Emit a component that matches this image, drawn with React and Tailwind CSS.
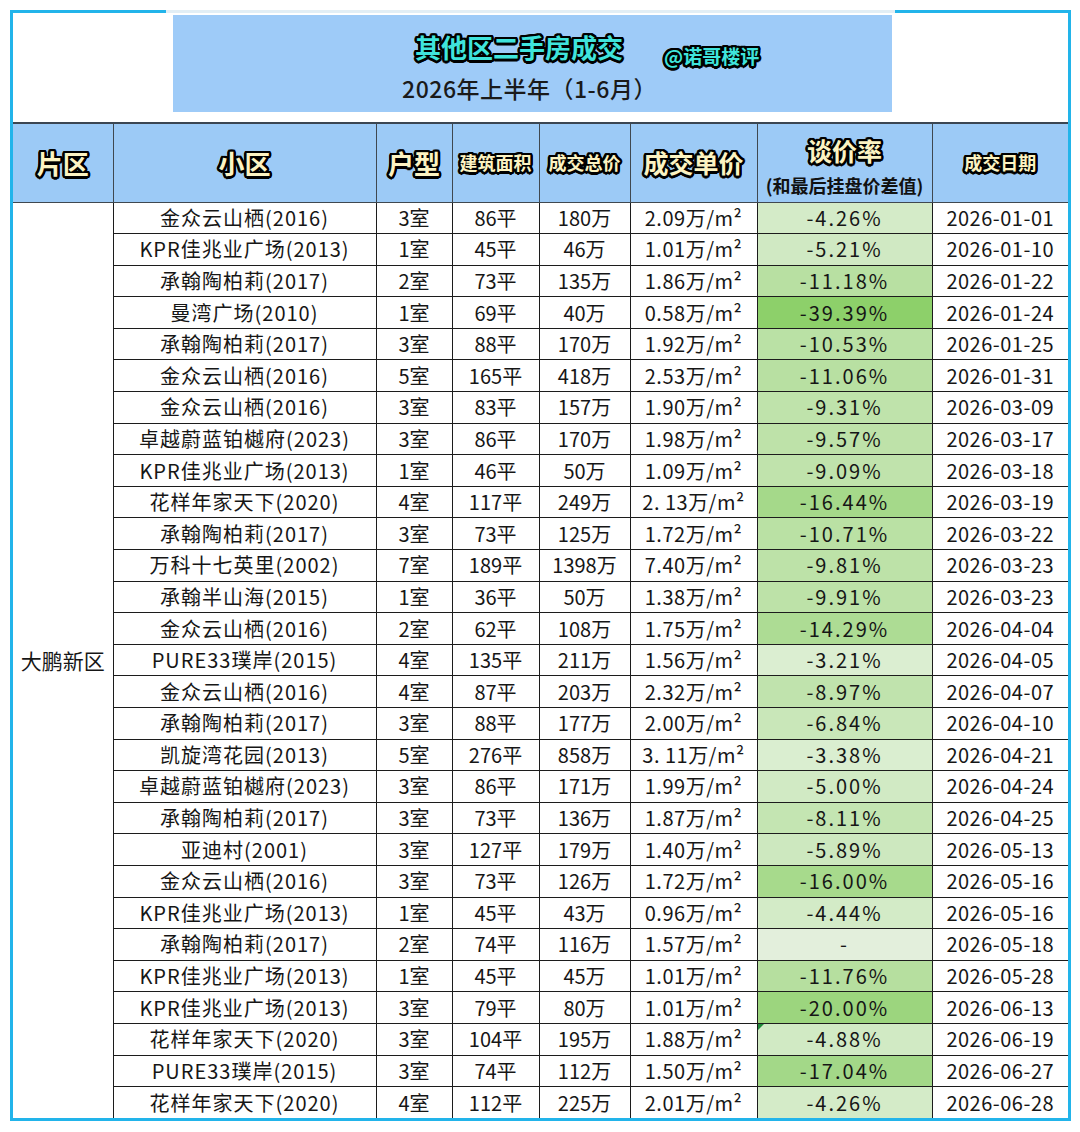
import React from 'react';

const OUTLINE =
  '[text-shadow:2.5px_0_0_#000,-2.5px_0_0_#000,0_2.5px_0_#000,0_-2.5px_0_#000,1.8px_1.8px_0_#000,-1.8px_1.8px_0_#000,1.8px_-1.8px_0_#000,-1.8px_-1.8px_0_#000,2.3px_1px_0_#000,-2.3px_1px_0_#000,2.3px_-1px_0_#000,-2.3px_-1px_0_#000,1px_2.3px_0_#000,-1px_2.3px_0_#000,1px_-2.3px_0_#000,-1px_-2.3px_0_#000]';

const ROWS = [
  ['金众云山栖(2016)', '3室', '86平', '180万', '2.09', '-4.26%', '2026-01-01'],
  ['KPR佳兆业广场(2013)', '1室', '45平', '46万', '1.01', '-5.21%', '2026-01-10'],
  ['承翰陶柏莉(2017)', '2室', '73平', '135万', '1.86', '-11.18%', '2026-01-22'],
  ['曼湾广场(2010)', '1室', '69平', '40万', '0.58', '-39.39%', '2026-01-24'],
  ['承翰陶柏莉(2017)', '3室', '88平', '170万', '1.92', '-10.53%', '2026-01-25'],
  ['金众云山栖(2016)', '5室', '165平', '418万', '2.53', '-11.06%', '2026-01-31'],
  ['金众云山栖(2016)', '3室', '83平', '157万', '1.90', '-9.31%', '2026-03-09'],
  ['卓越蔚蓝铂樾府(2023)', '3室', '86平', '170万', '1.98', '-9.57%', '2026-03-17'],
  ['KPR佳兆业广场(2013)', '1室', '46平', '50万', '1.09', '-9.09%', '2026-03-18'],
  ['花样年家天下(2020)', '4室', '117平', '249万', '2. 13', '-16.44%', '2026-03-19'],
  ['承翰陶柏莉(2017)', '3室', '73平', '125万', '1.72', '-10.71%', '2026-03-22'],
  ['万科十七英里(2002)', '7室', '189平', '1398万', '7.40', '-9.81%', '2026-03-23'],
  ['承翰半山海(2015)', '1室', '36平', '50万', '1.38', '-9.91%', '2026-03-23'],
  ['金众云山栖(2016)', '2室', '62平', '108万', '1.75', '-14.29%', '2026-04-04'],
  ['PURE33璞岸(2015)', '4室', '135平', '211万', '1.56', '-3.21%', '2026-04-05'],
  ['金众云山栖(2016)', '4室', '87平', '203万', '2.32', '-8.97%', '2026-04-07'],
  ['承翰陶柏莉(2017)', '3室', '88平', '177万', '2.00', '-6.84%', '2026-04-10'],
  ['凯旋湾花园(2013)', '5室', '276平', '858万', '3. 11', '-3.38%', '2026-04-21'],
  ['卓越蔚蓝铂樾府(2023)', '3室', '86平', '171万', '1.99', '-5.00%', '2026-04-24'],
  ['承翰陶柏莉(2017)', '3室', '73平', '136万', '1.87', '-8.11%', '2026-04-25'],
  ['亚迪村(2001)', '3室', '127平', '179万', '1.40', '-5.89%', '2026-05-13'],
  ['金众云山栖(2016)', '3室', '73平', '126万', '1.72', '-16.00%', '2026-05-16'],
  ['KPR佳兆业广场(2013)', '1室', '45平', '43万', '0.96', '-4.44%', '2026-05-16'],
  ['承翰陶柏莉(2017)', '2室', '74平', '116万', '1.57', '-', '2026-05-18'],
  ['KPR佳兆业广场(2013)', '1室', '45平', '45万', '1.01', '-11.76%', '2026-05-28'],
  ['KPR佳兆业广场(2013)', '3室', '79平', '80万', '1.01', '-20.00%', '2026-06-13'],
  ['花样年家天下(2020)', '3室', '104平', '195万', '1.88', '-4.88%', '2026-06-19'],
  ['PURE33璞岸(2015)', '3室', '74平', '112万', '1.50', '-17.04%', '2026-06-27'],
  ['花样年家天下(2020)', '4室', '112平', '225万', '2.01', '-4.26%', '2026-06-28'],
];

// colour scale of the 谈价率 column, read off the picture
const STOPS = [
  [3.21, [219, 238, 209]],
  [4.26, [212, 235, 200]],
  [9.81, [189, 226, 168]],
  [16.44, [165, 217, 138]],
  [20, [156, 213, 126]],
  [39.39, [141, 208, 106]],
];

function rateBg(rate) {
  if (rate === '-') return '#e3efdc';
  const v = Math.abs(parseFloat(rate));
  for (let i = 0; i < STOPS.length - 1; i++) {
    const [a, ca] = STOPS[i];
    const [b, cb] = STOPS[i + 1];
    if (v <= b) {
      const t = Math.max(0, (v - a) / (b - a));
      const c = ca.map((x, k) => Math.round(x + (cb[k] - x) * t));
      return `rgb(${c[0]},${c[1]},${c[2]})`;
    }
  }
  return 'rgb(141,208,106)';
}

const TH = `bg-[#9ccaf6] border border-[#3f4850] p-0 text-center align-middle font-bold text-[#fcf3c2] ${OUTLINE}`;
const TD = 'border border-[#1c1c1c] p-0 text-center align-middle leading-none text-[20px] text-[#161616]';

export default function App() {
  return (
    <div className="min-h-[1132px] bg-white pt-[10px] pl-[10px] font-['Noto_Sans_CJK_SC',sans-serif]">
      <div className="w-[1061px] border-x-[3px] border-b-[3px] border-[#22b4ea] bg-white">
        {/* top frame line, faint behind the title */}
        <div className="flex h-[3px]">
          <div className="w-[153px] bg-[#22b4ea]" />
          <div className="flex-1 bg-[#e2eef5]" />
          <div className="w-[173px] bg-[#22b4ea]" />
        </div>

        {/* Title */}
        <div className="h-[109px] pt-[2px] pl-[160px]">
          <div className="w-[719px] h-[97px] bg-[#9ecbf8] pt-[16px]">
            <div className="flex items-start h-[32px] pl-[242px]">
              <span className={`text-[26px] leading-[32px] font-bold text-[#3fe4dc] ${OUTLINE}`}>其他区二手房成交</span>
              <span className={`ml-[41px] mt-[15px] text-[19px] leading-[20px] font-bold text-[#3fe4dc] ${OUTLINE}`}>@诺哥楼评</span>
            </div>
            <div className="mt-[10px] pr-[6px] text-center text-[23px] leading-[30px] font-medium tracking-[0.5px] text-[#1a1a1a]">2026年上半年（1-6月）</div>
          </div>
        </div>
        <div className="h-[2px] bg-[#3b4652]" />

        <table className="w-full table-fixed border-collapse border-hidden">
          <colgroup>
            <col className="w-[100px]" />
            <col className="w-[263px]" />
            <col className="w-[76px]" />
            <col className="w-[87px]" />
            <col className="w-[91px]" />
            <col className="w-[127px]" />
            <col className="w-[175px]" />
            <col className="w-[136px]" />
          </colgroup>
          <thead>
            <tr className="h-[78px]">
              <th className={`${TH} text-[26px]`}>片区</th>
              <th className={`${TH} text-[26px]`}>小区</th>
              <th className={`${TH} text-[26px]`}>户型</th>
              <th className={`${TH} text-[18px]`}>建筑面积</th>
              <th className={`${TH} text-[18px]`}>成交总价</th>
              <th className={`${TH} text-[25px]`}>成交单价</th>
              <th className="bg-[#9ccaf6] border border-[#3f4850] p-0 pt-[11px] text-center align-top">
                <div className={`text-[25px] leading-[30px] font-bold text-[#fcf3c2] ${OUTLINE}`}>谈价率</div>
                <div className="mt-[9px] text-[18px] leading-[22px] font-bold text-[#111]">(和最后挂盘价差值)</div>
              </th>
              <th className={`${TH} text-[18px]`}>成交日期</th>
            </tr>
          </thead>
          <tbody>
            {ROWS.map((r, i) => (
              <tr key={i} className="h-[31.6px]">
                {i === 0 && (
                  <td rowSpan={ROWS.length} className={`${TD} text-[21px]`}>大鹏新区</td>
                )}
                <td className={`${TD} tracking-[1px]`}>{r[0]}</td>
                <td className={TD}>{r[1]}</td>
                <td className={TD}>{r[2]}</td>
                <td className={TD}>{r[3]}</td>
                <td className={`${TD} tracking-[0.5px]`}>{r[4]}万/m²</td>
                <td className={`${TD} relative tracking-[2px]`} style={{ backgroundColor: rateBg(r[5]) }}>
                  {i === 26 && (
                    <span className="absolute left-0 top-0 w-0 h-0 border-t-[6px] border-t-[#1f8a3a] border-r-[6px] border-r-transparent" />
                  )}
                  {r[5]}
                </td>
                <td className={`${TD} tracking-[0.5px]`}>{r[6]}</td>
              </tr>
            ))}
          </tbody>
        </table>
      </div>
    </div>
  );
}
